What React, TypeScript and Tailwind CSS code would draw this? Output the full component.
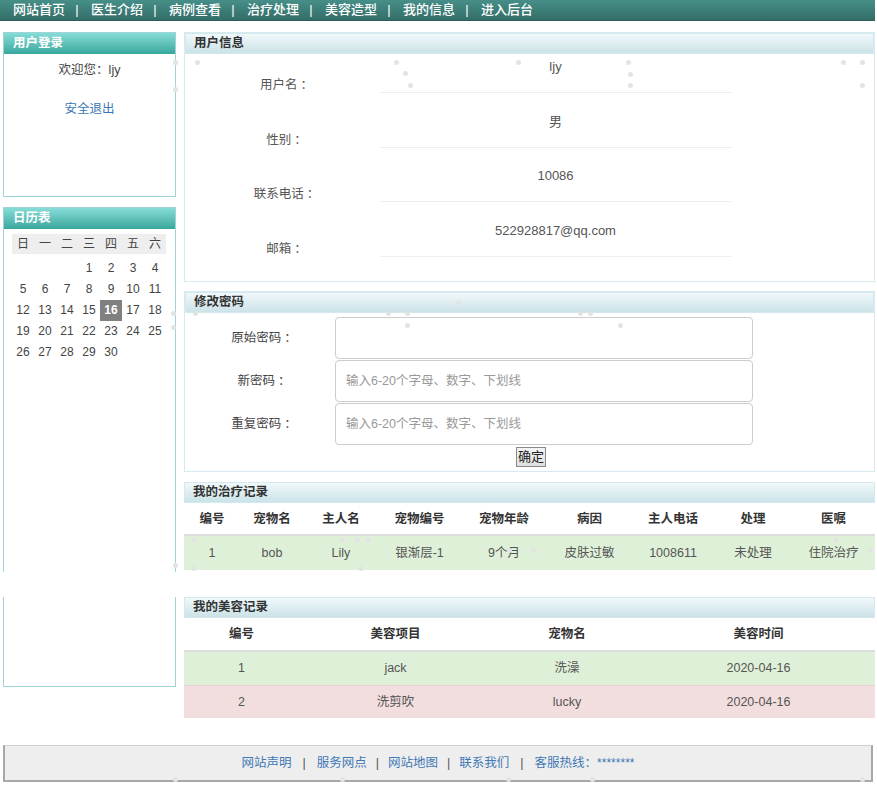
import React from 'react';

const navItems = ['网站首页', '医生介绍', '病例查看', '治疗处理', '美容造型', '我的信息', '进入后台'];

const weekDays = ['日', '一', '二', '三', '四', '五', '六'];
const calendarCells: (number | null)[] = [null, null, null, ...Array.from({ length: 30 }, (_, i) => i + 1)];

const userInfo = [
  { label: '用户名', value: 'ljy' },
  { label: '性别', value: '男' },
  { label: '联系电话', value: '10086' },
  { label: '邮箱', value: '522928817@qq.com' },
];

const treatmentHead = ['编号', '宠物名', '主人名', '宠物编号', '宠物年龄', '病因', '主人电话', '处理', '医嘱'];
const treatmentRow = ['1', 'bob', 'Lily', '银渐层-1', '9个月', '皮肤过敏', '1008611', '未处理', '住院治疗'];

const beautyHead = ['编号', '美容项目', '宠物名', '美容时间'];
const beautyRows = [
  { cells: ['1', 'jack', '洗澡', '2020-04-16'], bg: 'bg-[#dff0d8]' },
  { cells: ['2', '洗剪吹', 'lucky', '2020-04-16'], bg: 'bg-[#f2dede]' },
];

// falling-dot decoration that sits over the page
const dots: [number, number][] = [
  [175, 62], [175, 89], [197, 62], [396, 62], [405, 73], [410, 85], [518, 62], [628, 62], [630, 74], [630, 85],
  [843, 62], [862, 62], [862, 85], [195, 313], [388, 313], [407, 313], [407, 325], [580, 313], [590, 313],
  [620, 325], [458, 302], [173, 313], [173, 327], [193, 539], [193, 568], [342, 539], [357, 539], [368, 539],
  [360, 568], [509, 550], [533, 550], [836, 539], [870, 550], [175, 565], [175, 779], [342, 779], [508, 779],
  [592, 779], [862, 779],
];

const Colon = ({ gap = 'ml-[3px]' }: { gap?: string }) => (
  <span className={`${gap} font-['Noto_Sans_CJK_SC',sans-serif]`}>：</span>
);

const PanelHeader = ({ title }: { title: string }) => (
  <div className="h-[21px] bg-gradient-to-b from-[#f1f8fa] to-[#cbe3e8] border border-[#d3e9ee] px-[8px] leading-[19px] font-bold text-[#333]">
    {title}
  </div>
);

const SideHeader = ({ title }: { title: string }) => (
  <div className="h-[21px] bg-gradient-to-b from-[#86dcd8] to-[#37a79d] px-[9px] leading-[21px] font-bold text-white">
    {title}
  </div>
);

export default function App() {
  return (
    <div className="relative w-[877px] h-[785px] bg-white text-[12.5px] text-[#333] font-['Liberation_Sans','Noto_Sans_CJK_SC',sans-serif]">
      {/* top nav */}
      <nav className="h-[21px] w-[875px] bg-gradient-to-b from-[#468f89] to-[#346d67] border-b border-[#2e5f5a] flex items-center pl-[13px] text-white font-medium text-[13px]">
        {navItems.map((item, i) => (
          <React.Fragment key={item}>
            <span className="w-[50px] whitespace-nowrap">{item}</span>
            {i < navItems.length - 1 && <span className="w-[28px] text-center">|</span>}
          </React.Fragment>
        ))}
      </nav>

      <div className="flex gap-[8px] pl-[3px] mt-[11px]">
        {/* sidebar */}
        <aside className="w-[173px] flex flex-col">
          <div className="h-[165px] border border-[#9fd4d4]">
            <SideHeader title="用户登录" />
            <div className="text-center mt-[5px] leading-[20px] text-[#444]">
              欢迎您<Colon gap="ml-0" />
              <span>ljy</span>
            </div>
            <div className="text-center mt-[19px] leading-[20px] text-[#3a78b5]">安全退出</div>
          </div>

          <div className="mt-[10px] h-[365px] border border-b-0 border-[#9fd4d4]">
            <SideHeader title="日历表" />
            <div className="ml-[8px] mt-[5px] w-[154px]">
              <div className="grid grid-cols-7 h-[20px] bg-[#eeeeee] text-[#444] leading-[20px] text-center text-[12px]">
                {weekDays.map((d) => (
                  <span key={d}>{d}</span>
                ))}
              </div>
              <div className="grid grid-cols-7 mt-[4px] text-[12px] text-[#444] text-center">
                {calendarCells.map((n, i) => (
                  <span
                    key={i}
                    className={
                      n === 16
                        ? 'h-[21px] leading-[21px] bg-[#808080] text-white font-bold'
                        : 'h-[21px] leading-[21px]'
                    }
                  >
                    {n ?? ''}
                  </span>
                ))}
              </div>
            </div>
          </div>
          <div className="h-[25px]" />
          <div className="h-[90px] border border-t-0 border-[#9fd4d4]" />
        </aside>

        {/* main column */}
        <main className="w-[691px] flex flex-col">
          {/* user info */}
          <section className="h-[250px] border border-[#d6ebef]">
            <PanelHeader title="用户信息" />
            <div className="pt-[3px]">
              {userInfo.map((row) => (
                <div key={row.label} className="flex h-[54.5px] text-[#555]">
                  <div className="w-[195px] pl-[8px] text-center pt-[17px] leading-[20px]">
                    {row.label}
                    <Colon />
                  </div>
                  <div className="w-[351px] h-[36px] border-b border-[#eeeeee] text-center leading-[20px] text-[13px]">
                    {row.value}
                  </div>
                </div>
              ))}
            </div>
          </section>

          {/* change password */}
          <section className="mt-[9px] h-[181px] border border-[#d6ebef]">
            <PanelHeader title="修改密码" />
            <div className="pt-[4px] flex flex-col gap-[1px]">
              {[
                { label: '原始密码', ph: '' },
                { label: '新密码', ph: '输入6-20个字母、数字、下划线' },
                { label: '重复密码', ph: '输入6-20个字母、数字、下划线' },
              ].map((r) => (
                <div key={r.label} className="flex items-center h-[42px]">
                  <div className="w-[150px] pl-[8px] text-center text-[#444]">
                    {r.label}
                    <Colon />
                  </div>
                  <input
                    type="password"
                    placeholder={r.ph}
                    className="w-[418px] h-[42px] rounded-[4px] border border-[#cccccc] px-[10px] text-[12.5px] placeholder:text-[#999] outline-none"
                  />
                </div>
              ))}
            </div>
            <div className="flex justify-center mt-[2px] pl-[3px]">
              <button className="h-[20px] px-[1px] border border-[#8a8a8a] bg-gradient-to-b from-[#f5f5f5] to-[#e0e0e0] text-[13px] leading-[18px] text-[#222]">
                确定
              </button>
            </div>
          </section>

          {/* treatment records */}
          <section className="mt-[10px]">
            <PanelHeader title="我的治疗记录" />
            <div className="grid grid-cols-[56px_64px_74px_83px_86px_85px_82px_78px_83px] text-center">
              {treatmentHead.map((h) => (
                <div key={h} className="h-[33px] leading-[32px] font-bold text-[#333] border-b-2 border-[#dddddd]">
                  {h}
                </div>
              ))}
              {treatmentRow.map((c, i) => (
                <div key={i} className="h-[34px] leading-[34px] bg-[#dff0d8] text-[#555]">
                  {c}
                </div>
              ))}
            </div>
          </section>

          {/* beauty records */}
          <section className="mt-[27px]">
            <PanelHeader title="我的美容记录" />
            <div className="grid grid-cols-[115px_193px_150px_233px] text-center">
              {beautyHead.map((h) => (
                <div key={h} className="h-[34px] leading-[33px] font-bold text-[#333] border-b-2 border-[#dddddd]">
                  {h}
                </div>
              ))}
              {beautyRows.map((row, r) =>
                row.cells.map((c, i) => (
                  <div
                    key={`${r}-${i}`}
                    className={`h-[33px] leading-[32px] text-[#555] ${row.bg} ${r > 0 ? 'border-t border-[#e6d2d2]' : ''}`}
                  >
                    {c}
                  </div>
                ))
              )}
            </div>
          </section>
        </main>
      </div>

      {/* footer */}
      <footer className="mt-[27px] ml-[3px] w-[870px] h-[37px] bg-[#eeeeee] border-t border-l-2 border-r-2 border-b-2 border-t-[#d0d0d0] border-x-[#a8a8a8] border-b-[#a8a8a8] flex items-center justify-center text-[#3f78b5]">
        <span>网站声明</span>
        <span className="mx-[11px] text-[#555]">|</span>
        <span>服务网点</span>
        <span className="mx-[9px] text-[#555]">|</span>
        <span>网站地图</span>
        <span className="mx-[9px] text-[#555]">|</span>
        <span>联系我们</span>
        <span className="mx-[11px] text-[#555]">|</span>
        <span>
          客服热线
          <Colon gap="ml-0" />
          <span className="text-[12px]">********</span>
        </span>
      </footer>

      {/* decoration dots */}
      <div className="pointer-events-none absolute inset-0">
        {dots.map(([x, y], i) => (
          <span
            key={i}
            className="absolute w-[5px] h-[5px] rounded-full bg-[#e3e3e3]"
            style={{ left: x - 2, top: y - 2 }}
          />
        ))}
      </div>
    </div>
  );
}
